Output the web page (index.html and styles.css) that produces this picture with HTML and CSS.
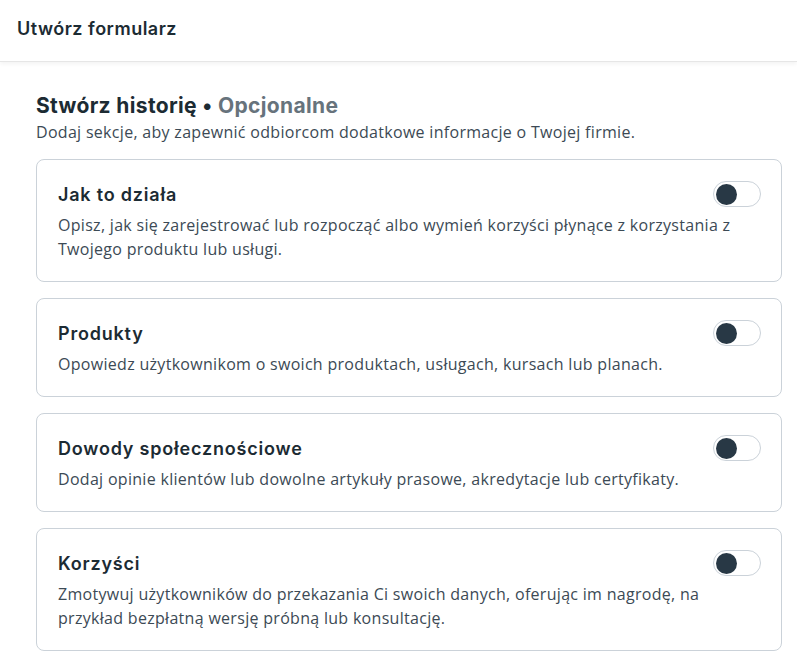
FILE: index.html
```html
<!DOCTYPE html>
<html lang="pl">
<head>
    <meta charset="UTF-8">
    <meta name="viewport" content="width=device-width, initial-scale=1.0">
    <title>Utwórz formularz</title>
    <link rel="stylesheet" href="styles.css">
</head>
<body>

    <header class="topbar">Utwórz formularz</header>

    <main class="content">
        <h1 class="section-title">Stwórz historię <span class="dot">•</span> <span class="optional">Opcjonalne</span></h1>
        <p class="section-desc">Dodaj sekcje, aby zapewnić odbiorcom dodatkowe informacje o Twojej firmie.</p>

        <div class="cards">
            <div class="card">
                <div class="card-head">
                    <h2>Jak to działa</h2>
                    <span class="toggle"><span class="knob"></span></span>
                </div>
                <p>Opisz, jak się zarejestrować lub rozpocząć albo wymień korzyści płynące z korzystania z Twojego produktu lub usługi.</p>
            </div>

            <div class="card">
                <div class="card-head">
                    <h2>Produkty</h2>
                    <span class="toggle"><span class="knob"></span></span>
                </div>
                <p>Opowiedz użytkownikom o swoich produktach, usługach, kursach lub planach.</p>
            </div>

            <div class="card">
                <div class="card-head">
                    <h2>Dowody społecznościowe</h2>
                    <span class="toggle"><span class="knob"></span></span>
                </div>
                <p>Dodaj opinie klientów lub dowolne artykuły prasowe, akredytacje lub certyfikaty.</p>
            </div>

            <div class="card">
                <div class="card-head">
                    <h2>Korzyści</h2>
                    <span class="toggle"><span class="knob"></span></span>
                </div>
                <p>Zmotywuj użytkowników do przekazania Ci swoich danych, oferując im nagrodę, na przykład bezpłatną wersję próbną lub konsultację.</p>
            </div>
        </div>
    </main>

</body>
</html>
```

FILE: styles.css
```css
body, html {
    margin: 0;
    padding: 0;
    background: #fff;
    color: #1c2b33;
    font-family: "Open Sans", Arial, sans-serif;
}

.topbar {
    height: 62px;
    box-sizing: border-box;
    padding: 18px 17px 0;
    font-family: Inter, "Noto Sans", sans-serif;
    font-size: 18px;
    font-weight: 600;
    letter-spacing: 0.5px;
    color: #1c2b33;
    border-bottom: 1px solid #e6e6e6;
    box-shadow: 0 2px 4px rgba(0, 0, 0, 0.05);
}

.content {
    padding: 30px 15px 0 36px;
}

.section-title {
    margin: 0;
    font-family: Inter, "Noto Sans", sans-serif;
    font-size: 21px;
    font-weight: 700;
    line-height: 28px;
    letter-spacing: 0.35px;
    color: #1c2b33;
}

.section-title .optional {
    color: #67737c;
}

.section-desc {
    margin: 1px 0 16px;
    font-size: 16px;
    line-height: 22px;
    letter-spacing: 0.3px;
    color: #3c4a55;
}

.cards {
    display: flex;
    flex-direction: column;
    gap: 16px;
}

.card {
    border: 1px solid #cbd2d9;
    border-radius: 8px;
    padding: 20px 20px 20px 21px;
}

.card-head {
    display: flex;
    align-items: center;
    justify-content: space-between;
    height: 28px;
}

.card h2 {
    margin: 0;
    font-family: Inter, "Noto Sans", sans-serif;
    font-size: 18px;
    font-weight: 600;
    letter-spacing: 0.8px;
    color: #1c2b33;
}

.card p {
    margin: 5px 0 0;
    font-size: 16px;
    line-height: 24px;
    letter-spacing: 0.3px;
    color: #3c4a55;
}

.toggle {
    display: flex;
    align-items: center;
    box-sizing: border-box;
    width: 48px;
    height: 26px;
    padding: 0 2px;
    border: 1px solid #cbd2d9;
    border-radius: 13px;
    background: #fff;
}

.knob {
    width: 21px;
    height: 21px;
    border-radius: 50%;
    background: #283845;
}
```
